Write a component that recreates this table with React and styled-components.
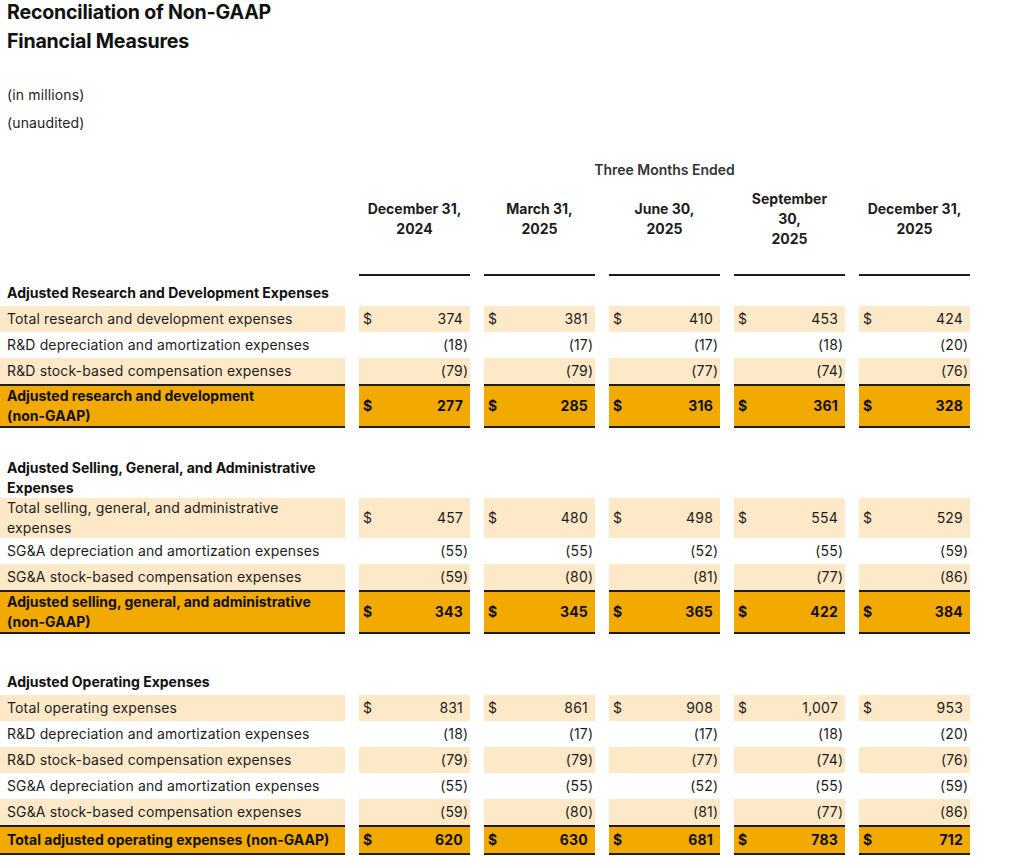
import React from 'react';
import styled, {createGlobalStyle, css} from 'styled-components';

const GlobalStyle = createGlobalStyle`
    body {
        margin: 0;
        background: #fff;
        color: #1d1d1d;
        font-family: Inter, "Liberation Sans", Arial, sans-serif;
        font-size: 14px;
    }
`;

const LIGHT = '#fde9c8';
const ORANGE = '#f2a900';
const INK = '#1d1d1d';

const Page = styled.div`
    width: 1024px;
    padding-bottom: 12px;
`;
const Title = styled.h1`
    margin: -2px 0 0;
    padding-left: 7px;
    max-width: 300px;
    font-size: 19.6px;
    font-weight: 700;
    line-height: 29px;
    letter-spacing: -0.2px;
    color: #111;
`;
const Note = styled.div`
    padding-left: 7px;
    line-height: 20px;
    letter-spacing: 0.14px;
    margin-top: ${({$gap}) => $gap}px;
`;
const Grid = styled.div`
    display: grid;
    grid-template-columns: 345px repeat(5, 111px);
    column-gap: 14px;
    margin-top: ${({$gap}) => ($gap ? `${$gap}px` : 0)};
`;
const Caption = styled.div`
    grid-column: 2 / 7;
    text-align: center;
    font-weight: 600;
    line-height: 20px;
    color: #333;
`;
const DateHead = styled.div`
    display: flex;
    align-items: center;
    justify-content: center;
    min-height: 60px;
    padding-bottom: 25px;
    border-bottom: 2px solid ${INK};
    text-align: center;
    font-weight: 700;
    line-height: 20px;
`;
const SectionTitle = styled.div`
    box-sizing: border-box;
    min-height: 27px;
    padding: 4px 7px 0;
    font-weight: 700;
    line-height: 20px;
    color: #111;
`;
const cellTone = css`
    background: ${({$tone}) => ($tone === 'light' ? LIGHT : $tone === 'total' ? ORANGE : 'transparent')};
    ${({$tone}) => $tone === 'total' && css`
        border-top: 2px solid ${INK};
        border-bottom: 2px solid ${INK};
        min-height: 28px;
        font-weight: 700;
        color: #111;
    `}
`;
const Label = styled.div`
    ${cellTone};
    display: flex;
    align-items: center;
    min-height: 26px;
    padding: 0 10px 0 7px;
    line-height: 20px;
    letter-spacing: ${({$tone}) => ($tone === 'total' ? '0' : '0.14px')};
`;
const Amount = styled.div`
    ${cellTone};
    display: flex;
    align-items: center;
    justify-content: space-between;
    min-height: 26px;
    padding: 0 3px 0 4px;
    line-height: 20px;
    letter-spacing: 0.2px;
`;
const Paren = styled.span`
    display: inline-block;
    width: 4px;
    visibility: ${({$show}) => ($show ? 'visible' : 'hidden')};
`;
const NoWrap = styled.span`
    white-space: nowrap;
`;

const columns = [
    ['December 31,', '2024'],
    ['March 31,', '2025'],
    ['June 30,', '2025'],
    ['September', '30,', '2025'],
    ['December 31,', '2025'],
];

const sections = [
    {
        gap: 3,
        title: 'Adjusted Research and Development Expenses',
        rows: [
            ['Total research and development expenses', [374, 381, 410, 453, 424], true],
            ['R&D depreciation and amortization expenses', [-18, -17, -17, -18, -20]],
            ['R&D stock-based compensation expenses', [-79, -79, -77, -74, -76]],
        ],
        total: ['Adjusted research and development', [277, 285, 316, 361, 328]],
    },
    {
        gap: 26,
        title: 'Adjusted Selling, General, and Administrative Expenses',
        rows: [
            ['Total selling, general, and administrative expenses', [457, 480, 498, 554, 529], true],
            ['SG&A depreciation and amortization expenses', [-55, -55, -52, -55, -59]],
            ['SG&A stock-based compensation expenses', [-59, -80, -81, -77, -86]],
        ],
        total: ['Adjusted selling, general, and administrative', [343, 345, 365, 422, 384]],
    },
    {
        gap: 34,
        title: 'Adjusted Operating Expenses',
        rows: [
            ['Total operating expenses', [831, 861, 908, 1007, 953], true],
            ['R&D depreciation and amortization expenses', [-18, -17, -17, -18, -20]],
            ['R&D stock-based compensation expenses', [-79, -79, -77, -74, -76]],
            ['SG&A depreciation and amortization expenses', [-55, -55, -52, -55, -59]],
            ['SG&A stock-based compensation expenses', [-59, -80, -81, -77, -86]],
        ],
        total: ['Total adjusted operating expenses', [620, 630, 681, 783, 712]],
    },
];

const fmt = n => Math.abs(n).toLocaleString('en-US');

const Value = ({n, dollar, tone}) => (
    <Amount $tone={tone}>
        <span>{dollar ? '$' : ''}</span>
        <span>
            {n < 0 ? '(' : ''}{fmt(n)}<Paren $show={n < 0}>)</Paren>
        </span>
    </Amount>
);

const Section = ({section}) => (
    <>
        <Grid $gap={section.gap}>
            <SectionTitle>{section.title}</SectionTitle>
        </Grid>
        {section.rows.map(([label, values, dollar], i) => {
            const tone = i % 2 === 0 ? 'light' : 'none';
            return (
                <Grid key={label + i}>
                    <Label $tone={tone}>{label}</Label>
                    {values.map((n, j) => <Value key={j} n={n} dollar={dollar} tone={tone}/>)}
                </Grid>
            );
        })}
        <Grid>
            <Label $tone="total">
                <span>{section.total[0]} <NoWrap>(non-GAAP)</NoWrap></span>
            </Label>
            {section.total[1].map((n, j) => <Value key={j} n={n} dollar tone="total"/>)}
        </Grid>
    </>
);

const App = () => {
    return (
        <Page>
            <GlobalStyle/>
            <Title>Reconciliation of Non-GAAP Financial Measures</Title>
            <Note $gap={29}>(in millions)</Note>
            <Note $gap={8}>(unaudited)</Note>
            <Grid $gap={27}>
                <Caption>Three Months Ended</Caption>
            </Grid>
            <Grid $gap={9}>
                <div/>
                {columns.map((lines, i) => (
                    <DateHead key={i}>
                        <div>{lines.map((l, k) => <div key={k}>{l}</div>)}</div>
                    </DateHead>
                ))}
            </Grid>
            {sections.map(s => <Section key={s.title} section={s}/>)}
        </Page>
    );
};

export default App;
